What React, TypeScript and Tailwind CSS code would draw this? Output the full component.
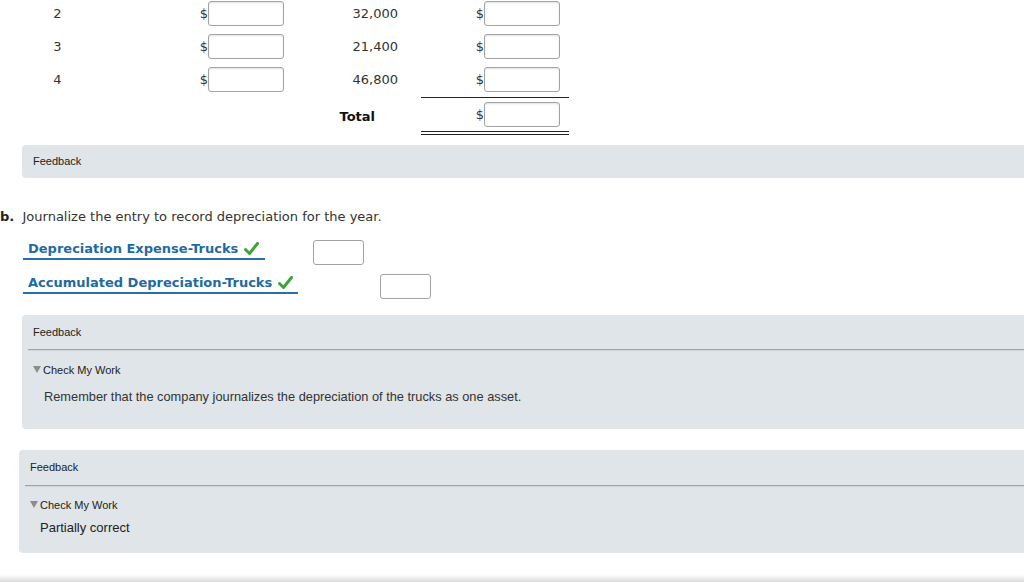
import React from 'react'

const rows = [
  { n: '2', amt: '32,000' },
  { n: '3', amt: '21,400' },
  { n: '4', amt: '46,800' },
]

function Box({ className = '' }: { className?: string }) {
  return (
    <div
      className={`w-[76px] h-[25px] rounded-[3px] border border-[#a3a3a3] bg-white shadow-[inset_0_1px_2px_rgba(0,0,0,0.12)] ${className}`}
    />
  )
}

function Check() {
  return (
    <svg width="15" height="14" viewBox="0 0 15 14" className="inline-block ml-[6px] -mt-[2px] align-middle">
      <path d="M1.5 7.5 L5.5 11.5 L13.5 1.5" fill="none" stroke="#3da33a" strokeWidth="3" strokeLinecap="round" strokeLinejoin="round" />
    </svg>
  )
}

function Tri() {
  return <span className="inline-block w-0 h-0 border-x-[4px] border-x-transparent border-t-[7px] border-t-[#8c8c8c] mr-[2px] translate-y-[-1px]" />
}

export default function App() {
  return (
    <div className="w-[1024px] h-[582px] overflow-hidden bg-white text-[#222] relative">
      {/* amounts table */}
      <div className="pt-[1px] font-['DejaVu_Sans',Verdana,sans-serif] text-[13px] text-[#333]">
        {rows.map((r, i) => (
          <div key={r.n} className={`flex items-start ${i === 2 ? 'h-[30px]' : 'h-[33px]'}`}>
            <div className="w-[115px] h-[25px] pt-[1px] flex items-center justify-center">{r.n}</div>
            <div className="w-[169px] flex items-center justify-end">
              <span>$</span>
              <Box />
            </div>
            <div className="w-[114px] h-[25px] pt-[1px] flex items-center justify-end">{r.amt}</div>
            <div className="ml-[23px] w-[148px] flex items-center justify-end pr-[9px]">
              <span>$</span>
              <Box />
            </div>
          </div>
        ))}
        <div className="flex">
          <div className="ml-[421px] w-[148px] h-[1px] bg-[#222]" />
        </div>
        <div className="flex items-center mt-[4px] h-[25px]">
          <div className="w-[284px]" />
          <div className="w-[114px] pt-[4px] flex justify-end pr-[23px] font-bold text-[#111]">Total</div>
          <div className="ml-[23px] w-[148px] flex items-center justify-end pr-[9px]">
            <span>$</span>
            <Box />
          </div>
        </div>
        <div className="flex mt-[4px]">
          <div className="ml-[421px] w-[148px] h-[4px] border-y border-[#222]" />
        </div>
      </div>

      {/* feedback 1 */}
      <div className="ml-[22px] mt-[10px] w-[1020px] h-[33px] rounded-[4px] bg-[#dfe5e8] flex items-center pl-[11px] font-['Liberation_Sans',Arial,sans-serif] text-[11px] text-[#222]">
        Feedback
      </div>

      {/* part b */}
      <div className="mt-[30px] h-[18px] leading-[18px] font-['DejaVu_Sans',Verdana,sans-serif] text-[13px] text-[#333]">
        <span className="font-bold text-[#222]">b.</span>&nbsp; Journalize the entry to record depreciation for the year.
      </div>

      <div className="font-['DejaVu_Sans',Verdana,sans-serif] text-[13px]">
        <div className="mt-[14px] h-[26px] flex items-start">
          <div className="ml-[23px] w-[242px] h-[20px] pl-[5px] leading-[18px] border-b-2 border-[#2b6fa6] font-bold text-[#1f6aa3]">
            Depreciation Expense-Trucks<Check />
          </div>
          <div className="ml-[48px] w-[51px] h-[25px] rounded-[3px] border border-[#a3a3a3] bg-white" />
        </div>
        <div className="mt-[8px] h-[26px] flex items-start">
          <div className="ml-[23px] w-[275px] h-[20px] pl-[5px] leading-[18px] border-b-2 border-[#2b6fa6] font-bold text-[#1f6aa3]">
            Accumulated Depreciation-Trucks<Check />
          </div>
          <div className="ml-[82px] w-[51px] h-[25px] rounded-[3px] border border-[#a3a3a3] bg-white" />
        </div>
      </div>

      {/* feedback 2 */}
      <div className="ml-[22px] mt-[15px] w-[1020px] rounded-[4px] bg-[#dfe5e8] font-['Liberation_Sans',Arial,sans-serif] text-[#222] pb-[24px]">
        <div className="h-[34px] flex items-center pl-[11px] text-[11px]">Feedback</div>
        <div className="ml-[6px] h-[2px] border-t border-[#9ea6ab] border-b border-b-[#d0d6d9]" />
        <div className="pt-[12px] pl-[11px] h-[26px] flex items-center text-[11px]">
          <Tri />Check My Work
        </div>
        <div className="mt-[11px] pl-[22px] h-[17px] leading-[17px] text-[12.8px] text-[#333]">
          Remember that the company journalizes the depreciation of the trucks as one asset.
        </div>
      </div>

      {/* feedback 3 */}
      <div className="ml-[19px] mt-[21px] w-[1020px] rounded-[4px] bg-[#dfe5e8] font-['Liberation_Sans',Arial,sans-serif] text-[#222] pb-[16px]">
        <div className="h-[35px] flex items-center pl-[11px] text-[11px]">Feedback</div>
        <div className="ml-[6px] h-[2px] border-t border-[#9ea6ab] border-b border-b-[#d0d6d9]" />
        <div className="pt-[11px] pl-[11px] h-[25px] flex items-center text-[11px]">
          <Tri />Check My Work
        </div>
        <div className="mt-[7px] pl-[21px] h-[18px] leading-[18px] text-[13px] text-[#222]">
          Partially correct
        </div>
      </div>

      <div className="absolute left-0 right-0 bottom-0 h-[7px] bg-gradient-to-b from-[#ffffff] to-[#d9d9d9]" />
    </div>
  )
}
